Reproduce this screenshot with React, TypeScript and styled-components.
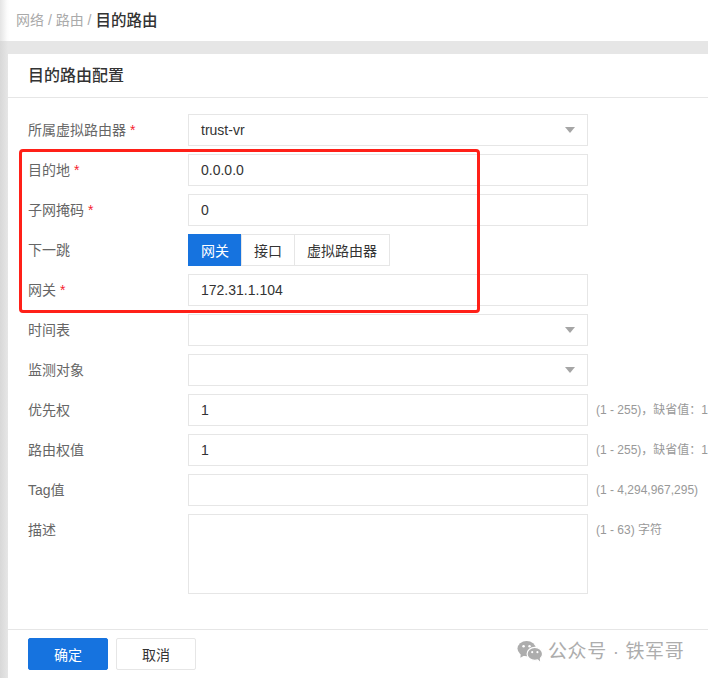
import styled, { createGlobalStyle } from "styled-components";

const GlobalStyle = createGlobalStyle`
  html, body {
    margin: 0;
    padding: 0;
    background: #fff;
  }
  * {
    box-sizing: border-box;
  }
`;

const Page = styled.div`
  position: relative;
  width: 708px;
  height: 678px;
  overflow: hidden;
  display: flex;
  flex-direction: column;
  font-family: "Liberation Sans", "Noto Sans CJK SC", sans-serif;
  font-size: 14px;
  color: #333;
`;

const Breadcrumb = styled.div`
  height: 41px;
  flex-shrink: 0;
  display: flex;
  align-items: center;
  gap: 4px;
  padding-left: 16px;
  padding-bottom: 3px;
  color: #aaa;
  background: linear-gradient(to right, #e4e4e4 0, #fbfbfb 7px, #fff 10px);
`;

const Current = styled.span`
  font-size: 15.5px;
  font-weight: 500;
  color: #333;
`;

const Body = styled.div`
  flex: 1;
  display: flex;
  flex-direction: column;
  padding: 13px 0 0 8px;
  background: linear-gradient(to right, #d8d8d8 0, #e6e6e6 8px);
`;

const Panel = styled.div`
  flex: 1;
  display: flex;
  flex-direction: column;
  background: #fff;
`;

const PanelTitle = styled.div`
  height: 44px;
  flex-shrink: 0;
  display: flex;
  align-items: center;
  padding-left: 20px;
  padding-bottom: 3px;
  font-size: 16px;
  font-weight: 500;
  color: #333;
  border-bottom: 1px solid #e6e6e6;
`;

const Form = styled.div`
  flex: 1;
  display: flex;
  flex-direction: column;
  gap: 8px;
  padding: 16px 0 0 20px;
`;

const Row = styled.div`
  display: flex;
  align-items: flex-start;
  width: 680px;
`;

const Label = styled.div`
  width: 160px;
  flex-shrink: 0;
  height: 32px;
  line-height: 33px;
  color: #666;
`;

const Required = styled.span`
  color: #f5222d;
  margin-left: 4px;
`;

const Field = styled.div<{ $tall?: boolean }>`
  width: 400px;
  height: ${(p) => (p.$tall ? "80px" : "32px")};
  flex-shrink: 0;
  display: flex;
  align-items: ${(p) => (p.$tall ? "flex-start" : "center")};
  justify-content: space-between;
  padding: 0 12px 0 12px;
  border: 1px solid #e6e6e6;
  color: #333;
  background: #fff;
`;

const Arrow = styled.span`
  width: 0;
  height: 0;
  border-left: 5px solid transparent;
  border-right: 5px solid transparent;
  border-top: 6px solid #a6a6a6;
`;

const Hint = styled.div`
  margin-left: 8px;
  height: 32px;
  line-height: 33px;
  font-size: 12px;
  color: #999;
  white-space: nowrap;
`;

const Segments = styled.div`
  display: flex;
  height: 32px;
`;

const Segment = styled.div<{ $active?: boolean }>`
  height: 32px;
  display: flex;
  align-items: center;
  padding: 0 12px 1px;
  margin-left: -1px;
  color: ${(p) => (p.$active ? "#fff" : "#333")};
  background: ${(p) => (p.$active ? "#1673df" : "#fff")};
  border: 1px solid ${(p) => (p.$active ? "#1673df" : "#e6e6e6")};

  &:first-child {
    margin-left: 0;
  }
`;

const Footer = styled.div`
  height: 49px;
  flex-shrink: 0;
  display: flex;
  gap: 8px;
  padding: 8px 0 0 20px;
  border-top: 1px solid #e6e6e6;
`;

const Button = styled.div<{ $primary?: boolean }>`
  width: 80px;
  height: 32px;
  display: flex;
  align-items: center;
  justify-content: center;
  border-radius: 2px;
  color: ${(p) => (p.$primary ? "#fff" : "#333")};
  background: ${(p) => (p.$primary ? "#1673df" : "#fff")};
  border: 1px solid ${(p) => (p.$primary ? "#1673df" : "#e6e6e6")};
`;

const Highlight = styled.div`
  position: absolute;
  left: 19px;
  top: 149px;
  width: 461px;
  height: 164px;
  border: 3px solid #ff2018;
  border-radius: 4px;
  pointer-events: none;
`;

const Watermark = styled.div`
  position: absolute;
  left: 517px;
  top: 636px;
  display: flex;
  align-items: center;
  gap: 5px;
  font-size: 19px;
  letter-spacing: 0.6px;
  color: #adadad;
  white-space: nowrap;
`;

const WeChatIcon = styled.svg`
  margin-top: 3px;
`;

const WeChat = () => (
  <WeChatIcon width="26" height="22" viewBox="0 0 27 22" fill="#adadad">
    <ellipse cx="10" cy="8.5" rx="9.5" ry="8" />
    <path d="M4 13 L3.5 18 L9 15 Z" />
    <ellipse cx="18.5" cy="14" rx="8" ry="6.8" fill="#adadad" stroke="#fff" strokeWidth="1.2" />
    <path d="M21 19 L24 22 L23.5 17 Z" />
    <circle cx="6.8" cy="6" r="1.3" fill="#fff" />
    <circle cx="13" cy="6" r="1.3" fill="#fff" />
    <circle cx="15.8" cy="12.2" r="1.1" fill="#fff" />
    <circle cx="21.2" cy="12.2" r="1.1" fill="#fff" />
  </WeChatIcon>
);

const rows = [
  { label: "时间表", select: true },
  { label: "监测对象", select: true },
  { label: "优先权", value: "1", hint: "(1 - 255)，缺省值：1" },
  { label: "路由权值", value: "1", hint: "(1 - 255)，缺省值：1" },
  { label: "Tag值", hint: "(1 - 4,294,967,295)" },
];

export default function App() {
  return (
    <Page>
      <GlobalStyle />
      <Breadcrumb>
        网络 / 路由 / <Current>目的路由</Current>
      </Breadcrumb>
      <Body>
        <Panel>
          <PanelTitle>目的路由配置</PanelTitle>
          <Form>
            <Row>
              <Label>
                所属虚拟路由器<Required>*</Required>
              </Label>
              <Field>
                trust-vr
                <Arrow />
              </Field>
            </Row>
            <Row>
              <Label>
                目的地<Required>*</Required>
              </Label>
              <Field>0.0.0.0</Field>
            </Row>
            <Row>
              <Label>
                子网掩码<Required>*</Required>
              </Label>
              <Field>0</Field>
            </Row>
            <Row>
              <Label>下一跳</Label>
              <Segments>
                <Segment $active>网关</Segment>
                <Segment>接口</Segment>
                <Segment>虚拟路由器</Segment>
              </Segments>
            </Row>
            <Row>
              <Label>
                网关<Required>*</Required>
              </Label>
              <Field>172.31.1.104</Field>
            </Row>
            {rows.map((row) => (
              <Row key={row.label}>
                <Label>{row.label}</Label>
                <Field>
                  {row.value}
                  {row.select && <span />}
                  {row.select && <Arrow />}
                </Field>
                {row.hint && <Hint>{row.hint}</Hint>}
              </Row>
            ))}
            <Row>
              <Label>描述</Label>
              <Field $tall />
              <Hint>(1 - 63) 字符</Hint>
            </Row>
          </Form>
          <Footer>
            <Button $primary>确定</Button>
            <Button>取消</Button>
          </Footer>
        </Panel>
      </Body>
      <Highlight />
      <Watermark>
        <WeChat />
        公众号 · 铁军哥
      </Watermark>
    </Page>
  );
}
